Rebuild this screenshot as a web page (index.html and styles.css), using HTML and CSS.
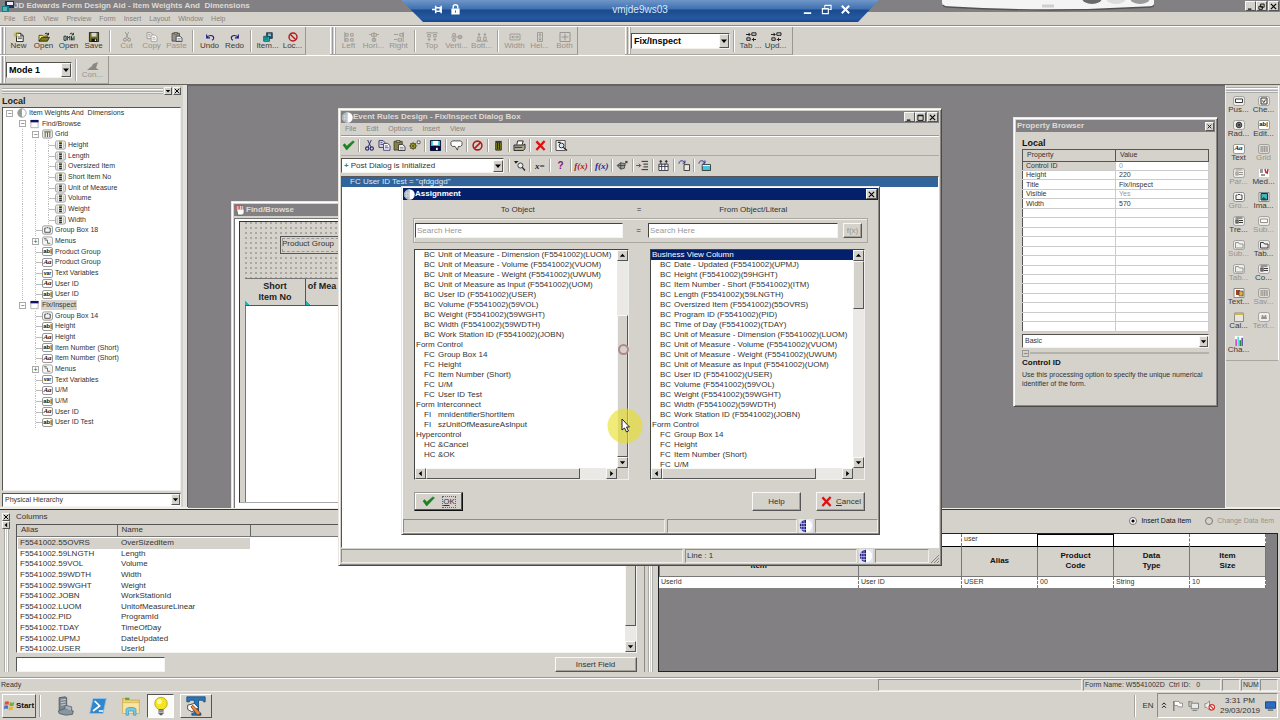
FILE: index.html
```html
<!DOCTYPE html>
<html lang="en">
<head>
<meta charset="utf-8">
<title>JD Edwards Form Design Aid</title>
<link rel="stylesheet" href="styles.css">
</head>
<body>
<svg class="sprite" aria-hidden="true">
  <symbol id="arr-d" viewBox="0 0 8 8"><path d="M1 2.5h6L4 6z" fill="#000"/></symbol>
  <symbol id="arr-u" viewBox="0 0 8 8"><path d="M1 5.5h6L4 2z" fill="#000"/></symbol>
  <symbol id="arr-l" viewBox="0 0 8 8"><path d="M5.5 1v6L2 4z" fill="#000"/></symbol>
  <symbol id="arr-r" viewBox="0 0 8 8"><path d="M2.5 1v6L6 4z" fill="#000"/></symbol>
  <symbol id="w-min" viewBox="0 0 8 8"><path d="M1 7h4" stroke="#000" stroke-width="1.4"/></symbol>
  <symbol id="w-max" viewBox="0 0 8 8"><path d="M1 1.3h6v6H1z M1 2h6" fill="none" stroke="#000" stroke-width="1"/></symbol>
  <symbol id="w-res" viewBox="0 0 8 8"><path d="M3 1.2h4v3.6H3z M1 3.8h4v3.4H1z" fill="#d4d0c8" stroke="#000"/></symbol>
  <symbol id="w-x" viewBox="0 0 8 8"><path d="M1 1l6 6M7 1L1 7" stroke="#000" stroke-width="1.3"/></symbol>
  <symbol id="globe" viewBox="0 0 12 12"><circle cx="6" cy="6" r="5.7" fill="#fff"/><path d="M6 .3a5.700 5.700 0 0 0 0 11.400z" fill="#9aa3ac"/><path d="M2.500 2.500v7M4.500 1v10M.5 4.500H6M.5 7.500H6" stroke="#e8eef2" stroke-width=".7"/></symbol>
  <symbol id="globe-b" viewBox="0 0 14 14"><rect width="14" height="14" fill="#e4e4ee"/><path d="M7 .8a6.200 6.200 0 0 1 0 12.400z" fill="#fff"/><path d="M7 .8a6.200 6.200 0 0 0 0 12.400z" fill="#1c1c8e"/><path d="M2.700 1v12M5 0v14M0 4.500h7M0 7.500h7M0 10.500h7" stroke="#e4e4ee" stroke-width=".6"/></symbol>
  <symbol id="new" viewBox="0 0 14 12"><path d="M4 1.500h5l3 3v7H4z" fill="#fff" stroke="#000"/><path d="M9 1.500v3h3M5.500 6h5M5.500 8h5" fill="none" stroke="#000" stroke-width=".8"/><path d="M3.500 0v7M0 3.500h7M1 1l5 5M6 1L1 6" stroke="#b5a82c" stroke-width=".8"/></symbol>
  <symbol id="open" viewBox="0 0 14 12"><path d="M1 11V4h4l1 1h5v2" fill="#ffe95c" stroke="#3a3a10"/><path d="M1 11l3-4.500h9.500L11 11z" fill="#7b7b22" stroke="#23230a"/><path d="M8 2.500c2-2 3-1 4 .8M12.300 1v2.500H10" fill="none" stroke="#000"/></symbol>
  <symbol id="omw" viewBox="0 0 14 12"><path d="M1 10V5h2.500v5zM5 10V5l1.500 2L8 5v5M10 5v5M13 5v5M11.500 7v3M8 2.500c2-2 3-1 4 .8M12.300 1v2.500H10" fill="none" stroke="#1c3b34" stroke-width="1.200"/></symbol>
  <symbol id="save" viewBox="0 0 12 12"><path d="M.5.500h11v11h-11z" fill="#6c7028" stroke="#111"/><path d="M3 1h6v4.500H3z" fill="#d9d6cf"/><path d="M3 8h6.500v3.500H3z" fill="#111"/><path d="M7 8.800h1.500v2H7z" fill="#eee"/></symbol>
  <symbol id="save-c" viewBox="0 0 12 12"><path d="M.5.500h11v11h-11z" fill="#18c6e8" stroke="#05052c"/><path d="M3 1h6v4.500H3z" fill="#fff"/><path d="M.5 6.500h11v5h-11z" fill="#0a0a3a"/><path d="M6.500 8.500h2v2.500h-2z" fill="#eee"/></symbol>
  <symbol id="cut" viewBox="0 0 12 12"><path d="M4 0l3.500 7.500M8 0L4.500 7.500" fill="none" stroke="currentColor"/><circle cx="3.500" cy="9.300" r="1.800" fill="none" stroke="currentColor" stroke-width="1.200"/><circle cx="8.500" cy="9.300" r="1.800" fill="none" stroke="currentColor" stroke-width="1.200"/></symbol>
  <symbol id="copy" viewBox="0 0 14 12"><path d="M1 .7h4.500l2 2V8H1z" fill="#eceae6" stroke="currentColor"/><path d="M6 3.700h4.500l2.500 2.500v5H6zM7.500 6.500h3M7.500 8.500h4M2.500 3h2.500M2.500 5h3" fill="#fff" stroke="currentColor" stroke-width=".9"/></symbol>
  <symbol id="paste" viewBox="0 0 14 12"><path d="M1 1.500h9v9.500H1z" fill="currentColor" stroke="#333" stroke-width=".8"/><path d="M3.500.5h4v2h-4z" fill="#d8c868" stroke="#333" stroke-width=".8"/><path d="M6 5h4.500L13 7.200v4.300H6z" fill="#fff" stroke="#333"/><path d="M7.500 8h4M7.500 9.800h4" stroke="#446" stroke-width=".7"/></symbol>
  <symbol id="gear" viewBox="0 0 14 12"><circle cx="5.500" cy="6.500" r="3" fill="#d8d23c" stroke="#444020"/><path d="M5.500 2v9M1 6.500h9M2.300 3.300l6.400 6.400M8.700 3.300L2.300 9.700" stroke="#5a5820" stroke-width=".9"/><path d="M10 1h3v3h-3z" fill="#fff" stroke="#555"/></symbol>
  <symbol id="undo" viewBox="0 0 14 12"><path d="M3 3v4h4M3 7c2-4 8-3.500 8.500 0 0 1.500-1 2.500-2 3" fill="none" stroke="#1b1b85" stroke-width="1.300"/></symbol>
  <symbol id="redo" viewBox="0 0 14 12"><path d="M11 3v4H7M11 7c-2-4-8-3.500-8.500 0 0 1.500 1 2.500 2 3" fill="none" stroke="#1b1b85" stroke-width="1.300"/></symbol>
  <symbol id="item" viewBox="0 0 14 14"><path d="M5 1h8v8H5z" fill="#1d5f74" stroke="#123"/><path d="M7 3h4M7 5h4" stroke="#fff"/><path d="M1 6h8v7H1z" fill="#20b5b5" stroke="#134"/><path d="M2 8h5M2 10h5" stroke="#063"/></symbol>
  <symbol id="no" viewBox="0 0 12 12"><circle cx="6" cy="6" r="4.800" fill="none" stroke="#b51a1a" stroke-width="1.700"/><path d="M2.600 2.600l6.800 6.800" stroke="#b51a1a" stroke-width="1.700"/></symbol>
  <symbol id="no2" viewBox="0 0 12 12"><circle cx="6" cy="6" r="4.800" fill="none" stroke="#b51a1a" stroke-width="1.700"/><path d="M9.400 2.600L2.600 9.400" stroke="#b51a1a" stroke-width="1.700"/></symbol>
  <symbol id="con" viewBox="0 0 14 10"><path d="M1 9l5-4 1-2 5-2-2 6 3 2z" fill="#8b8882"/></symbol>
  <symbol id="al1" viewBox="0 0 14 12"><path d="M2 0v12M3 2h3v3H3zM9 2h3v3H9zM3 8h3v3H3zM9 8h3v3H9z" fill="none" stroke="currentColor"/></symbol>
  <symbol id="al2" viewBox="0 0 14 12"><path d="M7 0v12M4 2h6v3H4zM5 8h4v3H5zM1 3h2M11 3h2" fill="none" stroke="currentColor"/></symbol>
  <symbol id="al3" viewBox="0 0 14 12"><path d="M12 0v12M8 2h4v3H8zM6 8h4v3H6zM1 3h5M1 9h4" fill="none" stroke="currentColor"/></symbol>
  <symbol id="al4" viewBox="0 0 14 12"><path d="M0 1h14M2 3h3v3H2zM9 3h3v3H9zM3.500 7v4M10.500 7v4M2 9h3M9 9h3" fill="none" stroke="currentColor"/></symbol>
  <symbol id="al5" viewBox="0 0 14 12"><path d="M0 6h14M2 2h3v3H2zM9 4h3v4H9zM2 8h3v3H2z" fill="none" stroke="currentColor"/></symbol>
  <symbol id="al6" viewBox="0 0 14 12"><path d="M0 11h14M2 6h3v4H2zM9 6h3v4H9zM3.500 1v4M10.500 1v4M2 3h3M9 3h3" fill="none" stroke="currentColor"/></symbol>
  <symbol id="wi" viewBox="0 0 14 12"><path d="M1 2.500h12v7H1zM3 6h8M5 4.500L3 6l2 1.500M9 4.500L11 6 9 7.500" fill="none" stroke="currentColor"/></symbol>
  <symbol id="he" viewBox="0 0 14 12"><path d="M4 .5h6v11H4zM7 2v8M5.500 4L7 2l1.500 2M5.500 8L7 10l1.500-2" fill="none" stroke="currentColor"/></symbol>
  <symbol id="bo" viewBox="0 0 14 12"><path d="M1 .5h12v11H1zM7 2v8M3 6h8" fill="none" stroke="currentColor" stroke-width="1.200"/></symbol>
  <symbol id="tab" viewBox="0 0 14 12"><path d="M1 3h5M4 1l2 2-2 2M8 1h5v3H8zM2 7h4v3H2zM8 9h5M10 7v4" fill="none" stroke="#222" stroke-width="1.200"/></symbol>
  <symbol id="check" viewBox="0 0 14 12"><path d="M1 5.500l4 5.500L13.500 2l-1.800-1L5 6.700 3 4z" fill="#118a1d" stroke="#0b5c14" stroke-width=".5"/></symbol>
  <symbol id="bubble" viewBox="0 0 14 12"><path d="M2.500 1h9L13 2.500v3L11.500 7H9l-1 4-2.500-4h-3L1 5.500v-3z" fill="#fff" stroke="#333" stroke-width=".9"/></symbol>
  <symbol id="bin" viewBox="0 0 12 12"><path d="M3 2.500h6V11H3z" fill="#8a8a1c" stroke="#222"/><path d="M2.500 1.500h7M5 3v7M7 3v7" stroke="#1d1d10"/></symbol>
  <symbol id="print" viewBox="0 0 14 12"><path d="M4 5l1-4h6l-1 4" fill="#fff" stroke="#222"/><path d="M1 5.500h10l2-1v5l-2 2H1z" fill="#aaa8a2" stroke="#222"/><path d="M2 8h8" stroke="#222"/><path d="M8 9.300h2" stroke="#cc2"/></symbol>
  <symbol id="redx" viewBox="0 0 12 12"><path d="M1.500 1.500L10.500 11M10.500 1L1.500 11" stroke="#e01010" stroke-width="2.500"/></symbol>
  <symbol id="find" viewBox="0 0 14 12"><path d="M1 .5h10v11H1z" fill="#f3f3f3" stroke="#444"/><circle cx="7" cy="6" r="2.600" fill="#dbe7ee" stroke="#222"/><path d="M9 8l4 3.500M3 2.500h3" stroke="#222" stroke-width="1.300"/></symbol>
  <symbol id="find2" viewBox="0 0 14 12"><path d="M1 1h5L3 4z" fill="#222"/><circle cx="8" cy="6" r="2.800" fill="#e6eef2" stroke="#333"/><path d="M10 8l3 3.500" stroke="#222" stroke-width="1.400"/></symbol>
  <symbol id="net" viewBox="0 0 14 12"><path d="M1 6l4-3 5 1-1 5-4 1zM5 3v7M2 6h8" fill="#9c9e98" stroke="#333" stroke-width=".8"/><path d="M10 1h2.500v2.500H10z" fill="#444"/></symbol>
  <symbol id="ins" viewBox="0 0 14 12"><path d="M0 6h5M3 4l2 2-2 2" fill="none" stroke="#b02020"/><path d="M6 1.500h7M8 4.500h5M8 7.500h5M6 10.500h7" stroke="#222"/></symbol>
  <symbol id="tbl" viewBox="0 0 14 12"><path d="M2 4.500h10v7H2zM2 7h10M5 4v7M8.500 4v7" fill="#fff" stroke="#223" stroke-width=".9"/><path d="M4 0v4M2.500 1.500h3M10 0v4M8.500 1.500h3" stroke="#223"/></symbol>
  <symbol id="cp2" viewBox="0 0 14 12"><path d="M1 4c0-4 5-4 6-1M7.500.5v3H5" fill="none" stroke="#22228a"/><path d="M6.500 5h6v6.500h-6z" fill="#e8e6df" stroke="#333"/></symbol>
  <symbol id="cp3" viewBox="0 0 14 12"><path d="M1 4c0-4 5-4 6-1M7.500.5v3H5" fill="none" stroke="#22228a"/><path d="M4.500 5h9v6.500h-9z" fill="#48c4dc" stroke="#333"/><path d="M5 6h8" stroke="#fff"/></symbol>
  <!-- tree icons share one rounded frame -->
  <symbol id="t-root" viewBox="0 0 12 10"><circle cx="6.500" cy="5" r="4.600" fill="#fff" stroke="#888" stroke-width=".8"/><path d="M6.500.4a4.600 4.600 0 0 0 0 9.200z" fill="#999"/></symbol>
  <symbol id="t-form" viewBox="0 0 12 10"><path d="M2 1h8v8H2z" fill="#fff" stroke="#999" stroke-width=".8"/><path d="M1.600.6h8.800v2.600H1.600z" fill="#121265"/></symbol>
  <symbol id="t-grid" viewBox="0 0 12 10"><rect x=".5" y=".5" width="11" height="9" rx="2" fill="#e9e9e4" stroke="#888" stroke-width=".8"/><path d="M2.500 2h7v1.300h-7z" fill="#6f7a1d"/><path d="M3.500 3v5.500M6 3v5.500M8.500 3v5.500" stroke="#555"/></symbol>
  <symbol id="t-col" viewBox="0 0 12 10"><rect x=".5" y=".5" width="11" height="9" rx="2" fill="#f1f1ee" stroke="#888" stroke-width=".8"/><path d="M4.500 1.500h3v7h-3z" fill="#222"/><path d="M4.500 1.500h3v1.500h-3z" fill="#8a9122"/><path d="M4.500 4.500h3M4.500 6.500h3" stroke="#fff" stroke-width=".7"/><path d="M2.500 2.500v6M9.500 2.500v6" stroke="#aaa" stroke-width=".8"/></symbol>
  <symbol id="t-box" viewBox="0 0 12 10"><rect x=".5" y=".5" width="11" height="9" rx="2" fill="#f5f5f3" stroke="#777" stroke-width=".8"/><path d="M4.500 3H3v4.500h6V3H7.500M5 2.500h2" fill="none" stroke="#333" stroke-width=".9"/></symbol>
  <symbol id="t-menu" viewBox="0 0 12 10"><rect x=".5" y=".5" width="11" height="9" rx="2" fill="#f5f5f3" stroke="#888" stroke-width=".8"/><path d="M2 2.500h3M3 4h3v3.500h3" fill="none" stroke="#555" stroke-width=".9"/></symbol>
  <!-- palette icons -->
  <symbol id="p-btn" viewBox="0 0 12 10"><rect x=".5" y=".5" width="11" height="9" rx="2" fill="#efeeeb" stroke="#888" stroke-width=".7"/><path d="M2.500 3h7v3.500h-7z" fill="#fff" stroke="currentColor"/></symbol>
  <symbol id="p-chk" viewBox="0 0 12 10"><rect x=".5" y=".5" width="11" height="9" rx="2" fill="#efeeeb" stroke="#888" stroke-width=".7"/><path d="M3 2h6v6H3zM4.500 4.500l1.200 2 2-3" fill="none" stroke="currentColor"/></symbol>
  <symbol id="p-rad" viewBox="0 0 12 10"><rect x=".5" y=".5" width="11" height="9" rx="2" fill="#efeeeb" stroke="#888" stroke-width=".7"/><circle cx="6" cy="5" r="2.800" fill="#777" stroke="currentColor"/><circle cx="6" cy="5" r="1.200" fill="currentColor"/></symbol>
  <symbol id="p-grid" viewBox="0 0 12 10"><rect x=".5" y=".5" width="11" height="9" rx="2" fill="#dddad4" stroke="#888" stroke-width=".7"/><path d="M2 3h8M2 5h8M2 7h8M4 2v6M6.500 2v6M9 2v6" stroke="currentColor" stroke-width=".8"/></symbol>
  <symbol id="p-form" viewBox="0 0 12 10"><rect x=".5" y=".5" width="11" height="9" rx="2" fill="#efeeeb" stroke="#888" stroke-width=".7"/><path d="M2.500 2h7M3 4h2v3H3zM6 4.500h4M6 6.500h4" fill="none" stroke="currentColor" stroke-width="1.200"/></symbol>
  <symbol id="p-med" viewBox="0 0 12 10"><path d="M1 1h10v8H1z" fill="#fff"/><path d="M2 2h3M2 4h3M3 7h4" stroke="#333"/><path d="M7 1l1 4M10 1L9 6" stroke="#c22" stroke-width="1.400"/></symbol>
  <symbol id="p-img" viewBox="0 0 12 10"><path d="M1 .5h10v9H1z" fill="#fff" stroke="#888"/><path d="M3 1.500h6.500v6.500H3z" fill="#3db8bb" stroke="#133"/><path d="M3 8l2.500-3 4 3z" fill="#175a3b"/></symbol>
  <symbol id="p-fold" viewBox="0 0 12 10"><rect x=".5" y=".5" width="11" height="9" rx="2" fill="#efeeeb" stroke="#888" stroke-width=".7"/><path d="M2.500 8V2.500h3l1 1.500h3.500v4z" fill="#eee" stroke="currentColor"/></symbol>
  <symbol id="p-text" viewBox="0 0 12 10"><path d="M1 .5h10v9H1z" fill="#fff" stroke="#888"/><path d="M3 2h4v5H3z" fill="#a3421d"/><path d="M6 3h4v5H6z" fill="#d9b43e" stroke="#333" stroke-width=".6"/></symbol>
  <symbol id="p-bin" viewBox="0 0 12 10"><rect x=".5" y=".5" width="11" height="9" rx="2" fill="#efeeeb" stroke="#888" stroke-width=".7"/><path d="M3 7l1-4h1l1 2 1-2h1l1 4z" fill="currentColor"/></symbol>
  <symbol id="p-cal" viewBox="0 0 12 10"><path d="M1.500 1h9v8.500h-9z" fill="#e9e7e0" stroke="#777" stroke-width=".8"/><path d="M1.500 1h9v2h-9z" fill="#c9b64f"/></symbol>
  <symbol id="p-chart" viewBox="0 0 12 12"><path d="M1 0h10v12H1z" fill="#fff"/><path d="M2.500 12V4" stroke="#d93bd0" stroke-width="2"/><path d="M5 12V1" stroke="#4ce0d8" stroke-width="2"/><path d="M7.500 12V5" stroke="#2c8d3c" stroke-width="2"/><path d="M9.800 12V2" stroke="#6a54b5" stroke-width="2"/></symbol>
</svg>

<header class="app-title">
  <svg class="app-ico" viewBox="0 0 12 11"><path d="M3 0h9v7H3z" fill="#24324a"/><path d="M5 1h6v3H5z" fill="#eef"/><path d="M0 5h7v6H0z" fill="#157f8a"/><path d="M1 7h4M1 9h4" stroke="#cff" stroke-width=".8"/></svg>
  <h1>JD Edwards Form Design Aid - Item Weights And&nbsp; Dimensions</h1>
  <div class="win-btns"><button aria-label="Minimize"><svg><use href="#w-min"/></svg></button><button aria-label="Restore"><svg><use href="#w-res"/></svg></button><button class="gap" aria-label="Close"><svg><use href="#w-x"/></svg></button></div>
</header>
<nav class="menu"><button>File</button><button>Edit</button><button>View</button><button>Preview</button><button>Form</button><button>Insert</button><button>Layout</button><button>Window</button><button>Help</button></nav>

<div class="bars">
  <div class="bar-row">
    <div class="bar">
      <i class="grip"></i>
      <button class="tb"><svg><use href="#new"/></svg>New</button><button class="tb"><svg><use href="#open"/></svg>Open</button><button class="tb"><svg><use href="#omw"/></svg>Open</button><button class="tb"><svg><use href="#save"/></svg>Save</button>
      <i class="sep"></i>
      <button class="tb" disabled><svg><use href="#cut"/></svg>Cut</button><button class="tb" disabled><svg><use href="#copy"/></svg>Copy</button><button class="tb" disabled><svg><use href="#paste"/></svg>Paste</button>
      <i class="sep"></i>
      <button class="tb"><svg><use href="#undo"/></svg>Undo</button><button class="tb"><svg><use href="#redo"/></svg>Redo</button>
      <i class="sep"></i>
      <button class="tb"><svg><use href="#item"/></svg>Item...</button><button class="tb"><svg><use href="#no"/></svg>Loc...</button>
    </div>
    <div class="bar bar-align">
      <i class="grip"></i>
      <button class="tb" disabled><svg><use href="#al1"/></svg>Left</button><button class="tb" disabled><svg><use href="#al2"/></svg>Hori...</button><button class="tb" disabled><svg><use href="#al3"/></svg>Right</button>
      <i class="sep"></i>
      <button class="tb" disabled><svg><use href="#al4"/></svg>Top</button><button class="tb" disabled><svg><use href="#al5"/></svg>Verti...</button><button class="tb" disabled><svg><use href="#al6"/></svg>Bott...</button>
      <i class="sep"></i>
      <button class="tb" disabled><svg><use href="#wi"/></svg>Width</button><button class="tb" disabled><svg><use href="#he"/></svg>Hei...</button><button class="tb" disabled><svg><use href="#bo"/></svg>Both</button>
    </div>
    <div class="bar bar-form">
      <i class="grip"></i>
      <div class="combo big"><select aria-label="Form"><option>Fix/Inspect</option></select><svg><use href="#arr-d"/></svg></div>
      <i class="sep"></i>
      <button class="tb"><svg><use href="#tab"/></svg>Tab ...</button><button class="tb"><svg><use href="#tab"/></svg>Upd...</button>
    </div>
  </div>
  <div class="bar-row">
    <div class="bar">
      <i class="grip"></i>
      <div class="combo mode"><select aria-label="Mode"><option>Mode 1</option></select><svg><use href="#arr-d"/></svg></div>
      <i class="sep"></i>
      <button class="tb con" disabled><svg><use href="#con"/></svg>Con...</button>
    </div>
  </div>
</div>

<main class="work">
  <aside class="tree-dock">
    <div class="dock-head"><i class="rails"></i><button class="mini" aria-label="Collapse"><svg><use href="#arr-d"/></svg></button><button class="mini" aria-label="Close"><svg><use href="#w-x"/></svg></button></div>
    <h2 class="local">Local</h2>
    <div class="tree-box">
      <ul class="tree">
        <li><b class="tog">−</b><svg><use href="#t-root"/></svg>Item Weights And&nbsp; Dimensions</li>
        <li><i></i><b class="tog">−</b><svg><use href="#t-form"/></svg>Find/Browse</li>
        <li><i></i><i class="v"></i><b class="tog">−</b><svg><use href="#t-grid"/></svg>Grid</li>
        <li><i></i><i class="v"></i><i class="v"></i><i class="s"></i><svg><use href="#t-col"/></svg>Height</li>
        <li><i></i><i class="v"></i><i class="v"></i><i class="s"></i><svg><use href="#t-col"/></svg>Length</li>
        <li><i></i><i class="v"></i><i class="v"></i><i class="s"></i><svg><use href="#t-col"/></svg>Oversized Item</li>
        <li><i></i><i class="v"></i><i class="v"></i><i class="s"></i><svg><use href="#t-col"/></svg>Short Item No</li>
        <li><i></i><i class="v"></i><i class="v"></i><i class="s"></i><svg><use href="#t-col"/></svg>Unit of Measure</li>
        <li><i></i><i class="v"></i><i class="v"></i><i class="s"></i><svg><use href="#t-col"/></svg>Volume</li>
        <li><i></i><i class="v"></i><i class="v"></i><i class="s"></i><svg><use href="#t-col"/></svg>Weight</li>
        <li><i></i><i class="v"></i><i class="v"></i><i class="s"></i><svg><use href="#t-col"/></svg>Width</li>
        <li><i></i><i class="v"></i><i class="s"></i><svg><use href="#t-box"/></svg>Group Box 18</li>
        <li><i></i><i class="v"></i><b class="tog">+</b><svg><use href="#t-menu"/></svg>Menus</li>
        <li><i></i><i class="v"></i><i class="s"></i><em>ab|</em>Product Group</li>
        <li><i></i><i class="v"></i><i class="s"></i><em class="aa">Aa</em>Product Group</li>
        <li><i></i><i class="v"></i><i class="s"></i><em class="var">var</em>Text Variables</li>
        <li><i></i><i class="v"></i><i class="s"></i><em class="aa">Aa</em>User ID</li>
        <li><i></i><i class="v"></i><i class="s"></i><em>ab|</em>User ID</li>
        <li><i></i><b class="tog">−</b><svg><use href="#t-form"/></svg><mark>Fix/Inspect</mark></li>
        <li><i></i><i></i><i class="s"></i><svg><use href="#t-box"/></svg>Group Box 14</li>
        <li><i></i><i></i><i class="s"></i><em>ab|</em>Height</li>
        <li><i></i><i></i><i class="s"></i><em class="aa">Aa</em>Height</li>
        <li><i></i><i></i><i class="s"></i><em>ab|</em>Item Number (Short)</li>
        <li><i></i><i></i><i class="s"></i><em class="aa">Aa</em>Item Number (Short)</li>
        <li><i></i><i></i><b class="tog">+</b><svg><use href="#t-menu"/></svg>Menus</li>
        <li><i></i><i></i><i class="s"></i><em class="var">var</em>Text Variables</li>
        <li><i></i><i></i><i class="s"></i><em class="aa">Aa</em>U/M</li>
        <li><i></i><i></i><i class="s"></i><em>ab|</em>U/M</li>
        <li><i></i><i></i><i class="s"></i><em class="aa">Aa</em>User ID</li>
        <li><i></i><i></i><i class="s"></i><em>ab|</em>User ID Test</li>
      </ul>
    </div>
    <div class="combo small"><select aria-label="Hierarchy"><option>Physical Hierarchy</option></select><svg><use href="#arr-d"/></svg></div>
  </aside>

  <section class="mdi">
    <div class="window find-win">
      <div class="win-title"><svg viewBox="0 0 12 12"><path d="M1 1h9v8l-2 2H3z" fill="#fff" stroke="#666"/><path d="M1 1h9v4H1z" fill="#d56a6a"/><path d="M3 1v4M6 1v4M8 1v4" stroke="#fff" stroke-width=".7"/></svg><h2>Find/Browse</h2></div>
      <div class="find-frame">
        <div class="find-body">
          <div class="dots"><div class="field">Product Group</div></div>
          <div class="find-heads"><span>Short<br>Item No</span><span>of Mea</span></div>
          <div class="find-rows"></div>
        </div>
      </div>
    </div>
  </section>

  <aside class="palette">
    <div class="palette-bar">
      <i class="rails"></i>
      <div class="palette-grid">
        <button class="tb"><svg><use href="#p-btn"/></svg>Pus...</button><button class="tb"><svg><use href="#p-chk"/></svg>Che...</button>
        <button class="tb"><svg><use href="#p-rad"/></svg>Rad...</button><button class="tb"><em>ab|</em>Edit...</button>
        <button class="tb"><em class="aa">Aa</em>Text</button><button class="tb" disabled><svg><use href="#p-grid"/></svg>Grid</button>
        <button class="tb" disabled><svg><use href="#p-form"/></svg>Par...</button><button class="tb"><svg><use href="#p-med"/></svg>Med...</button>
        <button class="tb" disabled><svg><use href="#t-box"/></svg>Gro...</button><button class="tb"><svg><use href="#p-img"/></svg>Ima...</button>
        <button class="tb"><svg><use href="#p-form"/></svg>Tre...</button><button class="tb" disabled><svg><use href="#p-btn"/></svg>Sub...</button>
        <button class="tb" disabled><svg><use href="#p-fold"/></svg>Sub...</button><button class="tb"><svg><use href="#p-fold"/></svg>Tab...</button>
        <button class="tb" disabled><svg><use href="#p-fold"/></svg>Tab...</button><button class="tb"><svg><use href="#p-form"/></svg>Co...</button>
        <button class="tb"><svg><use href="#p-text"/></svg>Text...</button><button class="tb" disabled><svg><use href="#p-grid"/></svg>Sav...</button>
        <button class="tb"><svg><use href="#p-cal"/></svg>Cal...</button><button class="tb" disabled><svg><use href="#p-bin"/></svg>Text...</button>
        <button class="tb"><svg><use href="#p-chart"/></svg>Cha...</button>
      </div>
    </div>
  </aside>
</main>

<section class="dock">
  <div class="dock-side"><button class="mini" aria-label="Close"><svg><use href="#w-x"/></svg></button><button class="mini" aria-label="Collapse"><svg><use href="#arr-l"/></svg></button><i class="vrails"></i></div>
  <div class="columns">
    <h2>Columns</h2>
    <div class="col-box">
      <table class="col-head"><tr><th class="c1">Alias</th><th class="c2">Name</th><th></th></tr></table>
      <div class="col-body">
        <ul class="col-list">
          <li class="sel"><span>F5541002.55OVRS</span><span>OverSizedItem</span></li>
          <li><span>F5541002.59LNGTH</span><span>Length</span></li>
          <li><span>F5541002.59VOL</span><span>Volume</span></li>
          <li><span>F5541002.59WDTH</span><span>Width</span></li>
          <li><span>F5541002.59WGHT</span><span>Weight</span></li>
          <li><span>F5541002.JOBN</span><span>WorkStationId</span></li>
          <li><span>F5541002.LUOM</span><span>UnitofMeasureLinear</span></li>
          <li><span>F5541002.PID</span><span>ProgramId</span></li>
          <li><span>F5541002.TDAY</span><span>TimeOfDay</span></li>
          <li><span>F5541002.UPMJ</span><span>DateUpdated</span></li>
          <li><span>F5541002.USER</span><span>UserId</span></li>
        </ul>
        <div class="vscroll"><button aria-label="Up"><svg><use href="#arr-u"/></svg></button><i class="thumb col-thumb"></i><i class="track"></i><button aria-label="Down"><svg><use href="#arr-d"/></svg></button></div>
      </div>
    </div>
    <div class="col-foot"><input type="text" aria-label="Column filter"><button class="push">Insert Field</button></div>
  </div>
  <i class="vrails splitter"></i>
  <div class="items">
    <div class="radios"><label><input type="radio" name="mode" checked>Insert Data Item</label><label class="off"><input type="radio" name="mode" disabled>Change Data Item</label></div>
    <div class="items-box">
      <table class="items-table">
        <colgroup><col><col class="w103"><col class="w76"><col class="w76"><col class="w76"><col class="w76"></colgroup>
        <tr class="query"><td></td><td></td><td>user</td><td class="cur"></td><td></td><td></td></tr>
        <tr><th>&nbsp;<br>Item</th><th></th><th>Alias</th><th>Product<br>Code</th><th>Data<br>Type</th><th>Item<br>Size</th></tr>
        <tr><td>UserId</td><td>User ID</td><td>USER</td><td>00</td><td>String</td><td>10</td></tr>
      </table>
    </div>
  </div>
</section>

<footer class="status"><span class="ready">Ready</span><span class="pane p-a"></span><span class="pane p-b">Form Name: W5541002D&nbsp; Ctrl ID:&nbsp;&nbsp; 0</span><span class="pane p-c"></span><span class="pane p-c">NUM</span><span class="pane p-c"></span></footer>

<footer class="taskbar">
  <button class="start"><svg viewBox="0 0 12 12"><path d="M1 2c2-1 3-1 4.500 0L4.800 5.500C3.500 4.800 2 4.800.5 5.500z" fill="#d9562b"/><path d="M6.300 2.300c2 1 3 1 5 0L10.500 6c-2 1-3 .8-4.800 0z" fill="#7aae3c"/><path d="M.3 6.300c1.500-.8 3-.8 4.300 0L4 10C2.500 9.200 1.500 9.200 0 10z" fill="#3f77c8"/><path d="M5.400 6.800c1.800.9 3 .9 4.800 0L9.500 10.500c-2 1-3 .8-4.700 0z" fill="#eab92e"/></svg>Start</button>
  <i class="sep"></i>
  <button class="task" aria-label="Server Manager"><svg viewBox="0 0 24 24"><path d="M5 2l7-1 2 1v15l-7 2-2-1z" fill="#7c8790" stroke="#4b545c"/><path d="M7 5l6-1M7 8l6-1M7 11l6-1" stroke="#d3dbe0"/><path d="M4 18l8-3 10 3-1 4-8 1-8-2z" fill="#8996a1" stroke="#505b64"/><path d="M12 15v-4l8 2v5" fill="#a7b4bf" stroke="#59636b"/></svg></button>
  <button class="task" aria-label="PowerShell"><svg viewBox="0 0 24 24"><path d="M6 3h16l-4 18H2z" fill="#3386c9" stroke="#8fc2e8"/><path d="M8 6l6 6-8 6M13 18h5" fill="none" stroke="#fff" stroke-width="2"/></svg></button>
  <button class="task" aria-label="Explorer"><svg viewBox="0 0 24 24"><path d="M2 3h7l2 2h11v15H2z" fill="#f1d277" stroke="#c9a545"/><path d="M2 8h20v13H2z" fill="#f8e5a2" stroke="#d4b45c"/><path d="M5 2h5v3H5z" fill="#58a846"/><path d="M6 23v-7c0-3 12-3 12 0v7h-3v-5H9v5z" fill="#7cc7e3" stroke="#4a9ec0"/></svg></button>
  <button class="task lit" aria-label="Tip"><svg viewBox="0 0 24 24"><circle cx="12" cy="9" r="7.500" fill="#f5e421" stroke="#b3a512"/><circle cx="10" cy="7" r="3" fill="#fdf9a8"/><path d="M9 16h6v5l-2 2h-2l-2-2z" fill="#5b5b57"/><path d="M9 18h6M9 20h6" stroke="#ddd"/></svg></button>
  <button class="task raised" aria-label="Form Design Aid"><svg viewBox="0 0 28 24"><path d="M3 1h22v6h-2l-1-2h-5v15l3 1v2H9v-2l3-1V5H7L6 7H3z" fill="#2b76b8" stroke="#174a7a"/><path d="M4 11l8-2 5 5-8 5-5-3z" fill="#fff" stroke="#333"/><path d="M8 13l2-2 9 9-1 3-3-1z" fill="#e98a3c" stroke="#7b3a10"/></svg></button>
  <span class="grow"></span>
  <i class="sep"></i><span class="lang">EN</span>
  <div class="tray">
    <svg viewBox="0 0 8 12"><path d="M1.500 5L4 2.500 6.500 5M1.500 9L4 6.500 6.500 9" fill="none" stroke="#111" stroke-width="1.300"/></svg>
    <svg viewBox="0 0 12 12"><path d="M2 1v11" stroke="#666" stroke-width="1.200"/><path d="M2.500 1.500h5l1 2h3v4H7L6 6H2.500z" fill="#fff" stroke="#777" stroke-width=".8"/></svg>
    <svg viewBox="0 0 12 12"><path d="M3.500 3.500h8v6h-8z" fill="#e9e9e9" stroke="#777"/><path d="M5 11.500h5M1 1v6h2M1 2h4" stroke="#777" fill="none"/></svg>
    <svg viewBox="0 0 12 12"><path d="M1 4h2l3-3v10L3 8H1z" fill="#eee" stroke="#777" stroke-width=".8"/><circle cx="8.500" cy="8" r="3" fill="#fff" stroke="#d63228" stroke-width="1.300"/><path d="M6.500 6l4 4" stroke="#d63228" stroke-width="1.200"/></svg>
    <time>3:31 PM<br>29/03/2019</time>
    <svg viewBox="0 0 12 12"><path d="M.5 2h11v7H.5z" fill="#2c6dc4" stroke="#1b3e78"/><path d="M3 11h6" stroke="#333"/></svg>
  </div>
</footer>

<section class="window prop-win">
  <div class="win-title"><h2>Property Browser</h2><div class="win-btns"><button aria-label="Close"><svg><use href="#w-x"/></svg></button></div></div>
  <div class="prop-body">
    <h3>Local</h3>
    <table class="props">
      <tr><th>Property</th><th>Value</th></tr>
      <tr class="dim"><td class="hi">Control ID</td><td>0</td></tr>
      <tr><td>Height</td><td>220</td></tr>
      <tr><td>Title</td><td>Fix/Inspect</td></tr>
      <tr class="dim"><td>Visible</td><td>Yes</td></tr>
      <tr><td>Width</td><td>570</td></tr>
      <tr><td></td><td></td></tr><tr><td></td><td></td></tr><tr><td></td><td></td></tr><tr><td></td><td></td></tr><tr><td></td><td></td></tr><tr><td></td><td></td></tr><tr><td></td><td></td></tr><tr><td></td><td></td></tr><tr><td></td><td></td></tr><tr><td></td><td></td></tr><tr><td></td><td></td></tr><tr><td></td><td></td></tr><tr><td></td><td></td></tr>
    </table>
    <div class="combo small"><select aria-label="Level"><option>Basic</option></select><svg><use href="#arr-d"/></svg></div>
    <div class="fold"><b class="tog">−</b><i></i></div>
    <h4>Control ID</h4>
    <p>Use this processing option to specify the unique numerical identifier of the form.</p>
  </div>
</section>

<section class="window er-win">
  <div class="win-title"><svg><use href="#globe"/></svg><h2>Event Rules Design - Fix/Inspect Dialog Box</h2><div class="win-btns"><button aria-label="Minimize"><svg><use href="#w-min"/></svg></button><button aria-label="Maximize"><svg><use href="#w-max"/></svg></button><button class="gap" aria-label="Close"><svg><use href="#w-x"/></svg></button></div></div>
  <nav class="menu er-menu"><button>File</button><button>Edit</button><button>Options</button><button>Insert</button><button>View</button></nav>
  <div class="er-bar">
    <button aria-label="OK"><svg><use href="#check"/></svg></button><i class="sep"></i>
    <button class="navy" aria-label="Cut"><svg><use href="#cut"/></svg></button><button class="navy" aria-label="Copy"><svg><use href="#copy"/></svg></button><button class="olive" aria-label="Paste"><svg><use href="#paste"/></svg></button><button aria-label="Settings"><svg><use href="#gear"/></svg></button><i class="sep"></i>
    <button aria-label="Save"><svg><use href="#save-c"/></svg></button><i class="sep"></i><button aria-label="Comment"><svg><use href="#bubble"/></svg></button><i class="sep"></i><button aria-label="Disable"><svg><use href="#no2"/></svg></button><i class="sep"></i><button aria-label="Delete"><svg><use href="#bin"/></svg></button><i class="sep"></i><button aria-label="Print"><svg><use href="#print"/></svg></button><i class="sep"></i><button aria-label="Remove"><svg><use href="#redx"/></svg></button><i class="sep"></i><button aria-label="Find"><svg><use href="#find"/></svg></button>
  </div>
  <div class="er-bar second">
    <div class="combo er-combo"><b>+</b><select aria-label="Event"><option>Post Dialog is Initialized</option></select><svg><use href="#arr-d"/></svg></div>
    <div class="er-tools">
    <i class="sep"></i><button aria-label="If"><svg><use href="#find2"/></svg></button><i class="sep"></i><button class="fx" aria-label="Assign">x=</button><i class="sep"></i><button class="fx purple">?</button><i class="sep"></i><button class="fx red">f(x)</button><i class="sep"></i><button class="fx blue">f(x)</button><i class="sep"></i><button aria-label="Connect"><svg><use href="#net"/></svg></button><i class="sep"></i><button aria-label="Indent"><svg><use href="#ins"/></svg></button><i class="sep"></i><button aria-label="Table"><svg><use href="#tbl"/></svg></button><i class="sep"></i><button aria-label="Report"><svg><use href="#cp2"/></svg></button><i class="sep"></i><button aria-label="Form call"><svg><use href="#cp3"/></svg></button>
    </div>
  </div>
  <div class="er-code"><p>FC User ID Test = "qfdgdgd"</p></div>
  <div class="er-status"><span class="pane grow"></span><span class="pane line">Line : 1</span><svg><use href="#globe-b"/></svg><span class="pane tail"></span><svg class="sizer" viewBox="0 0 8 8"><path d="M0 8L8 0M3 8l5-5M6 8l2-2" stroke="#888"/></svg></div>
</section>

<section class="window dlg" role="dialog" aria-label="Assignment">
  <div class="win-title active"><svg><use href="#globe"/></svg><h2>Assignment</h2><div class="win-btns"><button aria-label="Close"><svg><use href="#w-x"/></svg></button></div></div>
  <div class="dlg-heads"><label for="to">To Object</label><span>=</span><label for="from">From Object/Literal</label></div>
  <div class="dlg-search"><input id="to" type="text" placeholder="Search Here"><span>=</span><input id="from" type="text" placeholder="Search Here"><button class="push" disabled>f(x)</button></div>
  <div class="dlg-lists">
    <div class="list">
      <ul>
        <li><b>BC</b>Unit of Measure - Dimension (F5541002)(LUOM)</li><li><b>BC</b>Unit of Measure - Volume (F5541002)(VUOM)</li><li><b>BC</b>Unit of Measure - Weight (F5541002)(UWUM)</li><li><b>BC</b>Unit of Measure as Input (F5541002)(UOM)</li><li><b>BC</b>User ID (F5541002)(USER)</li><li><b>BC</b>Volume (F5541002)(59VOL)</li><li><b>BC</b>Weight (F5541002)(59WGHT)</li><li><b>BC</b>Width (F5541002)(59WDTH)</li><li><b>BC</b>Work Station ID (F5541002)(JOBN)</li><li class="cat">Form Control</li><li><b>FC</b>Group Box 14</li><li><b>FC</b>Height</li><li><b>FC</b>Item Number (Short)</li><li><b>FC</b>U/M</li><li><b>FC</b>User ID Test</li><li class="cat">Form Interconnect</li><li><b>FI</b>mnIdentifierShortItem</li><li><b>FI</b>szUnitOfMeasureAsInput</li><li class="cat">Hypercontrol</li><li><b>HC</b>&amp;Cancel</li><li><b>HC</b>&amp;OK</li>
      </ul>
      <div class="vscroll"><button aria-label="Up"><svg><use href="#arr-u"/></svg></button><i class="track"></i><i class="thumb to-thumb"></i><button aria-label="Down"><svg><use href="#arr-d"/></svg></button></div>
      <div class="hscroll"><button aria-label="Left"><svg><use href="#arr-l"/></svg></button><i class="thumb"></i><i class="track"></i><button aria-label="Right"><svg><use href="#arr-r"/></svg></button></div>
    </div>
    <div class="list">
      <ul>
        <li class="cat sel">Business View Column</li><li><b>BC</b>Date - Updated (F5541002)(UPMJ)</li><li><b>BC</b>Height (F5541002)(59HGHT)</li><li><b>BC</b>Item Number - Short (F5541002)(ITM)</li><li><b>BC</b>Length (F5541002)(59LNGTH)</li><li><b>BC</b>Oversized Item (F5541002)(55OVRS)</li><li><b>BC</b>Program ID (F5541002)(PID)</li><li><b>BC</b>Time of Day (F5541002)(TDAY)</li><li><b>BC</b>Unit of Measure - Dimension (F5541002)(LUOM)</li><li><b>BC</b>Unit of Measure - Volume (F5541002)(VUOM)</li><li><b>BC</b>Unit of Measure - Weight (F5541002)(UWUM)</li><li><b>BC</b>Unit of Measure as Input (F5541002)(UOM)</li><li><b>BC</b>User ID (F5541002)(USER)</li><li><b>BC</b>Volume (F5541002)(59VOL)</li><li><b>BC</b>Weight (F5541002)(59WGHT)</li><li><b>BC</b>Width (F5541002)(59WDTH)</li><li><b>BC</b>Work Station ID (F5541002)(JOBN)</li><li class="cat">Form Control</li><li><b>FC</b>Group Box 14</li><li><b>FC</b>Height</li><li><b>FC</b>Item Number (Short)</li><li><b>FC</b>U/M</li>
      </ul>
      <div class="vscroll"><button aria-label="Up"><svg><use href="#arr-u"/></svg></button><i class="thumb from-thumb"></i><i class="track"></i><button aria-label="Down"><svg><use href="#arr-d"/></svg></button></div>
      <div class="hscroll"><button aria-label="Left"><svg><use href="#arr-l"/></svg></button><i class="thumb"></i><i class="track"></i><button aria-label="Right"><svg><use href="#arr-r"/></svg></button></div>
    </div>
  </div>
  <div class="dlg-btns"><button class="push default"><svg><use href="#check"/></svg><span><u>O</u>K</span></button><button class="push help">Help</button><button class="push"><svg><use href="#redx"/></svg><span><u>C</u>ancel</span></button></div>
  <div class="dlg-status"><span class="pane grow"></span><span class="pane mid"></span><svg><use href="#globe-b"/></svg><span class="pane end"></span></div>
</section>

<div class="remote">
  <svg viewBox="0 0 12 12"><path d="M0 6h4M4 2v8M4 4h5v4H4M10 2v8" fill="none" stroke="#fff" stroke-width="1.600"/></svg>
  <svg viewBox="0 0 12 12"><path d="M1.500 5h9v6.500h-9z" fill="#fff"/><path d="M3.500 5V3c0-3 5-3 5 0v2" fill="none" stroke="#fff" stroke-width="1.500"/><path d="M6 7v2.500" stroke="#2d5f9f"/></svg>
  <span>vmjde9ws03</span>
  <svg viewBox="0 0 12 12"><path d="M2 10h8" stroke="#fff" stroke-width="2"/></svg>
  <svg viewBox="0 0 12 12"><path d="M4 1.500h7V6H9M4 1.500V4M1.500 5h6.500v5.500H1.500zM1 5.500h7" fill="none" stroke="#fff" stroke-width="1.200"/></svg>
  <svg viewBox="0 0 12 12"><path d="M2 2l8 8M10 2l-8 8" stroke="#fff" stroke-width="2.200"/></svg>
</div>
<svg class="recorder" viewBox="0 0 212 12"><path d="M0 0h212v3q0 4-4 4Q105 13 6 7 1 7 0 3z" fill="#f4f4f4"/><path d="M1 5q1 2 5 2 100 6 202 0 3 0 4-2" fill="none" stroke="#55514f" stroke-width="1.300"/><path d="M100 4.500h12v3h-12z" fill="#d0d0d0"/><ellipse cx="150" cy="-2" rx="10" ry="6" fill="#6a6a6a"/><ellipse cx="174" cy="-2" rx="10" ry="6" fill="#dcdcdc"/><ellipse cx="198" cy="-2" rx="10" ry="6" fill="#9a9a9a"/></svg>
<svg class="pointer" viewBox="0 0 36 36"><circle cx="18" cy="18" r="17.500" fill="#e8e020" opacity=".6"/><path d="M15 11v11l2.500-2 2 4 2-1-2-4h3z" fill="#fff" stroke="#222"/></svg>
<i class="ring"></i>
</body>
</html>
```
FILE: styles.css
```css
:root {
  --face: #d5d2cb;
  --desk: #828083;
  --shade: #85827d;
  --dark: #444;
  --text: #333;
  --off: #96938d;
  --navy: #05206a;
}
* { box-sizing: border-box; }
body {
  margin: 0;
  min-height: 100vh;
  display: flex;
  flex-direction: column;
  position: relative;
  overflow: hidden;
  background: var(--face);
  color: var(--text);
  font: 8px/10px "Liberation Sans", Arial, sans-serif;
}
.sprite { display: none; }
h1, h2, h3, h4, p, ul { margin: 0; padding: 0; font-size: 8px; }
ul { list-style: none; }
i, em { font-style: normal; }
svg { flex: none; }
table { border-collapse: collapse; }
button, input, select { font: inherit; color: inherit; margin: 0; padding: 0; border: 0; border-radius: 0; background: none; }
button { display: flex; align-items: center; justify-content: center; }
select { appearance: none; flex: 1; min-width: 0; outline: 0; }
button:disabled { color: var(--off); }
.grow { flex: 1; }

.win-btns { display: flex; margin-left: auto; }
.win-btns button, .mini, .vscroll button, .hscroll button, .combo > svg, .thumb {
  background: var(--face);
  border: 1px solid;
  border-color: #f8f8f6 #555 #555 #f8f8f6;
}
.win-btns button { width: 11px; height: 10px; }
.win-btns .gap { margin-left: 1px; }
.win-btns svg { width: 7px; height: 7px; }
.mini { width: 8px; height: 8px; }
.mini svg { width: 6px; height: 6px; }
.sep { flex: none; width: 8px; height: 22px; background: linear-gradient(90deg, transparent 3px, #a5a29c 3px 4px, #fff 4px 5px, transparent 5px); }
.grip { flex: none; width: 6px; height: 100%; border-left: 1px solid #fff; border-right: 1px solid #aaa; background: linear-gradient(90deg, transparent 1px, #999 1px 2px, transparent 2px 3px, #fff 3px 4px, transparent 4px); }

.app-title { display: flex; align-items: center; height: 12px; padding: 0 1px 0 2px; background: var(--desk); color: #dedbd5; }
.app-ico { width: 12px; height: 11px; }
.app-title h1 { font-size: 8px; white-space: nowrap; }
.menu { display: flex; gap: 8px; height: 13px; padding: 0 4px; color: #85827d; font-size: 7px; }
.bars { border-top: 1px solid #8f8c86; border-bottom: 1px solid #66625c; }
.bar-row { display: flex; height: 29px; border-top: 1px solid #fff; }
.bar { display: flex; align-items: center; height: 28px; border-right: 1px solid #9a9792; border-bottom: 1px solid #a9a6a0; }
.bar-align { margin-left: 24px; }
.bar-form { margin-left: 47px; padding-right: 4px; }
.tb { flex-direction: column; justify-content: flex-start; width: 25px; height: 22px; padding-top: 2px; line-height: 8px; white-space: nowrap; color: #3c3a38; }
.tb svg { width: 14px; height: 10px; }
.con { margin-right: 3px; }
.combo { display: flex; align-items: center; border: 1px solid; border-color: #55524e #f4f2ee #f4f2ee #55524e; background: #fff; }
.combo > svg { width: 9px; height: 11px; }
.combo.small { height: 14px; }
.combo.small select { padding-left: 2px; font-size: 7px; }
.combo.big, .combo.mode { height: 16px; font-size: 9px; font-weight: bold; color: #000; padding-left: 2px; }
.combo.big > svg, .combo.mode > svg { width: 10px; height: 14px; }
.combo.big { width: 99px; }
.combo.mode { width: 66px; }

.work { flex: 1; display: flex; min-height: 0; }
.tree-dock { display: flex; flex-direction: column; width: 188px; padding: 2px 6px 1px 2px; border-right: 1px solid #5f5c58; box-shadow: inset -4px 0 #e4e2de; }
.dock-head { display: flex; align-items: center; gap: 1px; height: 8px; }
.rails { flex: 1; height: 6px; border-top: 1px solid #aaa; border-bottom: 1px solid #aaa; box-shadow: inset 0 1px #fff, inset 0 -1px #eee; background: linear-gradient(transparent 2px, #aaa 2px 3px, transparent 3px); }
.local { font-size: 9px; line-height: 12px; color: #222; }
.tree-box { flex: 1; min-height: 0; margin: 0 0 2px; overflow: hidden; background: #fff; border: 1px solid; border-color: #555 #eee #eee #555; }
.tree { display: grid; grid-auto-rows: 1fr; height: 320px; font-size: 7px; }
.tree li { display: flex; align-items: stretch; line-height: 10px; white-space: nowrap; }
.tree li > i, .tree .tog { flex: none; width: 13px; }
.tree .v, .tree .s { background: repeating-linear-gradient(#bbb 0 1px, transparent 1px 2px) 6px 0 / 1px 100% no-repeat; }
.tree .s { background: repeating-linear-gradient(#bbb 0 1px, transparent 1px 2px) 6px 0 / 1px 100% no-repeat, linear-gradient(#bbb, #bbb) 7px 5px / 6px 1px no-repeat; }
.tog { color: #444; font: 7px/7px "Liberation Sans", sans-serif; text-align: center; }
.tree .tog { align-self: center; width: 7px; height: 7px; margin: 0 3px; border: 1px solid #aaa; line-height: 5px; }
.tree svg, .tree em { width: 11px; height: 10px; margin-right: 2px; }
.tree em, .palette em { align-self: center; width: 11px; height: 9px; border: 1px solid #999; border-radius: 2px; font: bold 6px/7px "Liberation Sans", sans-serif; text-align: center; color: #111; background: #fff; }
.tree .aa, .palette .aa { font: italic bold 7px/7px "Liberation Serif", serif; }
.tree .var { font-size: 5px; }
.tree mark { align-self: center; margin-left: -1px; padding: 0 1px; background: #d5d3cf; color: inherit; line-height: 10px; }

.mdi { flex: 1; position: relative; overflow: hidden; background: var(--desk); border-top: 1px solid #66625c; }
.window { position: absolute; display: flex; flex-direction: column; padding: 2px; background: var(--face); border: 1px solid; border-color: #e8e6e2 #4c4a48 #4c4a48 #e8e6e2; box-shadow: inset 1px 1px #fff, inset -1px -1px #8d8a86; }
.win-title { display: flex; flex: none; align-items: center; height: 12px; padding: 0 1px 0 1px; background: var(--desk); color: #dedbd5; }
.win-title h2 { white-space: nowrap; }
.win-title > svg { width: 11px; height: 11px; }
.win-title.active { background: var(--navy); color: #fff; }

.find-win { left: 43px; top: 115px; width: 500px; height: 340px; }
.find-frame { flex: 1; display: flex; margin-top: 2px; padding: 2px 0 0 4px; background: #fff; border: 1px solid #777; }
.find-body { flex: 1; display: flex; flex-direction: column; height: 282px; border: 1px solid; border-color: #2626a0 #aaa #aaa #2626a0; padding-left: 5px; background: var(--face); }
.dots { height: 56px; padding: 14px 0 0 35px; background: radial-gradient(circle at 1px 1px, #aaa7a1 1px, transparent 1px) 0 0 / 5px 5px; }
.field { width: 90px; height: 18px; padding: 1px 0 0 1px; border: 1px solid #555; outline: 1px dashed #999; outline-offset: -3px; background: var(--face); line-height: 12px; }
.find-heads { display: flex; height: 28px; font: bold 9px/11px "Liberation Sans", sans-serif; text-align: center; color: #222; border-top: 1px solid #777; border-bottom: 1px solid #555; }
.find-heads span { width: 61px; padding-top: 2px; border-right: 1px solid #555; background: linear-gradient(45deg, #1cb3bb 3px, transparent 3px); }
.find-heads span + span { width: 33px; }
.find-rows { flex: 1; background: #fff; border-left: 1px solid #777; }

.palette { width: 55px; padding: 1px 1px 0 0; border-left: 1px solid #efedea; }
.palette-bar { display: flex; flex-direction: column; padding-top: 1px; border-right: 1px solid #fff; border-bottom: 1px solid #a9a6a0; }
.palette .rails { flex: none; }
.palette-grid { display: grid; grid-template-columns: 25px 25px; grid-auto-rows: 24px; padding: 0 0 3px; }
.palette .tb { padding-top: 3px; }
.palette .tb svg { width: 12px; height: 10px; }
.palette .tb em { width: 12px; height: 10px; flex: none; }

.dock { display: flex; margin-top: 1px; padding-bottom: 5px; border-top: 1px solid #333; box-shadow: 0 -2px #efedea; }
.dock-side { display: flex; flex-direction: column; width: 16px; padding: 3px 0 0 2px; }
.vrails { width: 5px; flex: 1; border-left: 1px solid #aaa; border-right: 1px solid #aaa; margin-left: 2px; background: linear-gradient(90deg, #fff 1px, transparent 1px 2px, #fff 2px 3px, transparent 3px); }
.columns { flex: 1; padding-right: 7px; border-right: 1px solid #8d8a86; }
.columns h2 { font-weight: normal; line-height: 14px; }
.col-box { background: #fff; border: 1px solid; border-color: #555 #f4f4f4 #f4f4f4 #555; }
.col-head { width: 100%; table-layout: fixed; }
.col-head th { height: 12px; padding: 0 4px; text-align: left; font-weight: normal; line-height: 10px; background: var(--face); border-right: 1px solid #666; border-bottom: 1px solid #777; }
.c1 { width: 100px; }
.c2 { width: 133px; }
.col-body { display: flex; height: 115px; overflow: hidden; }
.col-list { flex: 1; display: grid; grid-auto-rows: 1fr; height: 118px; padding-top: 1px; }
.col-list li { display: flex; gap: 4px; width: 232px; padding-left: 2px; line-height: 10px; margin-left: 1px; }
.col-list li span:first-child { width: 97px; }
.sel { background: var(--face); }
.col-foot { display: flex; justify-content: space-between; align-items: center; padding-top: 4px; }
.col-foot input { width: 149px; height: 15px; background: #fff; border: 1px solid; border-color: #555 #f4f4f4 #f4f4f4 #555; }
.col-foot .push { width: 82px; height: 15px; }
.push { background: var(--face); border: 1px solid; border-color: #f8f8f6 #555 #555 #f8f8f6; box-shadow: inset -1px -1px #a5a29c; }
.splitter { flex: none; margin: 6px 5px 0 3px; }
.items { flex: 1; display: flex; flex-direction: column; padding-right: 2px; }
.radios { display: flex; justify-content: flex-end; align-items: center; gap: 14px; height: 23px; padding-right: 4px; }
.radios label { display: flex; align-items: center; gap: 4px; font-size: 7px; color: #111; }
.radios .off { color: var(--off); }
.radios input { appearance: none; width: 8px; height: 8px; border: 1px solid #777; border-radius: 50%; background: #fff; }
.radios input:checked { background: radial-gradient(circle, #000 1px, #fff 2px); }
.radios input:disabled { background: var(--face); }
.items-box { flex: 1; padding-right: 11px; background: var(--desk); border: 1px solid #222; }
.items-table { width: 100%; table-layout: fixed; font-size: 7px; line-height: 9px; }
.items-table td { height: 12px; padding: 0 2px; background: #fff; border-right: 1px dashed #777; vertical-align: top; }
.items-table th { height: 30px; padding: 0; background: var(--face); border: 1px solid #777; border-top: 1px solid #000; font-size: 8px; line-height: 10px; color: #111; }
.items-table .cur { border: 1px solid #000; }
.w103 { width: 103px; }
.w76 { width: 76px; }

.status { display: flex; align-items: center; gap: 1px; height: 15px; padding: 0 2px 0 1px; border-top: 1px solid #999; border-bottom: 1px solid #f4f2ee; box-shadow: inset 0 1px #fff; font-size: 7px; }
.ready { flex: 1; }
.pane { height: 12px; padding: 0 1px; border: 1px solid; border-color: #908d88 #f0eeea #f0eeea #908d88; line-height: 10px; white-space: nowrap; }
.p-a { width: 204px; }
.p-b { width: 138px; }
.p-c { width: 18px; }
.taskbar { display: flex; align-items: center; height: 28px; padding: 1px 2px 2px; }
.start { gap: 1px; width: 34px; height: 24px; font-weight: bold; color: #111; border: 1px solid; border-color: #fff #555 #555 #fff; }
.start svg { width: 11px; height: 11px; }
.task { width: 33px; height: 24px; }
.task svg { width: 20px; height: 20px; }
.start + .sep { margin-right: 4px; }
.task.lit { width: 27px; background: #fbfbfa; border: 1px solid; border-color: #555 #fff #fff #555; }
.task.raised { width: 32px; margin-left: 6px; border: 1px solid; border-color: #fff #555 #555 #fff; }
.task.raised svg { width: 24px; }
.lang { width: 18px; text-align: center; }
.tray { display: flex; align-items: center; gap: 5px; height: 25px; padding: 0 1px 0 3px; border: 1px solid; border-color: #8f8c86 #fff #fff #8f8c86; }
.tray svg { width: 11px; height: 11px; }
.tray svg:first-child { width: 6px; }
.tray time { width: 40px; text-align: center; line-height: 10px; }

.prop-win { left: 1013px; top: 117px; width: 205px; height: 290px; }
.prop-win .win-btns button { width: 9px; height: 9px; }
.prop-win .win-btns svg { width: 5px; height: 5px; }
.prop-body { padding: 5px 6px; }
.prop-body h3 { font-size: 9px; line-height: 12px; color: #111; }
.props { width: 100%; height: 183px; table-layout: fixed; margin-bottom: 2px; font-size: 7px; line-height: 8px; background: #fff; border: 1px solid; border-color: #555 #ccc #ccc #555; }
.props th { height: 11px; padding: 0 4px; text-align: left; font-weight: normal; background: var(--face); border: 1px solid #555; }
.props td { height: 9px; padding: 0 3px; border-right: 1px solid #ccc; border-bottom: 1px solid #ccc; }
.props .hi { background: var(--face); }
.dim td + td { color: #999; }
.fold { display: flex; align-items: center; gap: 1px; padding: 2px 0; height: 10px; }
.fold .tog { width: 7px; height: 7px; border: 1px solid #999; line-height: 5px; }
.fold i { flex: 1; height: 2px; background: #b5b2ac; }
.prop-body h4 { line-height: 10px; color: #111; }
.prop-body p { padding-top: 2px; font-size: 7px; line-height: 9px; }

.er-win { left: 338px; top: 108px; width: 604px; height: 458px; }
.er-menu { gap: 10px; padding: 0 4px; border-bottom: 1px solid #999; box-shadow: 0 1px #fff; height: 13px; }
.er-bar { display: flex; flex: none; align-items: center; height: 20px; border-bottom: 1px solid #aaa; }
.er-bar.second { height: 19px; border: 0; }
.er-bar button { width: 15px; height: 14px; }
.er-bar svg { width: 13px; height: 11px; }
.er-bar .combo svg { width: 10px; height: 12px; }
.er-bar .sep { width: 6px; height: 13px; background: linear-gradient(90deg, transparent 2px, #a5a29c 2px 3px, #fff 3px 4px, transparent 4px); }
.navy { color: #29296e; }
.olive { color: #85823a; }
.er-combo { width: 163px; height: 15px; }
.er-combo b { color: #2d9c2d; padding: 0 2px; }
.er-tools { display: flex; flex: none; align-items: center; justify-content: space-between; width: 206px; margin-left: 2px; }
.fx { font: italic bold 9px/12px "Liberation Serif", serif; color: #222; }
.er-bar .purple { color: #7d1580; font: bold 10px/12px "Liberation Sans", sans-serif; }
.er-bar .red { color: #a82222; }
.er-bar .blue { color: #25259a; }
.er-code { flex: 1; margin: 1px 0; background: #fff; border: 1px solid; border-color: #555 #fff #fff #555; }
.er-code p { padding-left: 8px; line-height: 10px; background: #31649b; color: #dfe9f4; }
.er-status, .dlg-status { display: flex; flex: none; align-items: center; gap: 2px; height: 14px; }
.er-status .pane { height: 14px; font-size: 8px; line-height: 12px; }
.er-status .line { width: 172px; }
.er-status svg { width: 14px; height: 14px; }
.er-status .tail { width: 54px; }
.er-status .sizer { width: 8px; height: 8px; align-self: flex-end; }

.dlg { left: 401px; top: 186px; width: 479px; height: 349px; padding: 1px; }
.dlg .win-btns button { width: 11px; }
.dlg-heads { display: grid; grid-template-columns: 1fr 22px 1fr; height: 17px; padding: 0 18px 0 8px; align-items: center; text-align: center; margin-top: 1px; }
.dlg-heads span { padding-left: 7px; }
.dlg-search { display: grid; grid-template-columns: 1fr 25px 190px 24px; align-items: center; height: 25px; margin: 0 10px; padding: 0 5px 0 1px; border: 1px solid #aaa7a1; box-shadow: inset 1px 1px #eee; text-align: center; }
.dlg-search span { padding-left: 6px; }
.dlg-search input { height: 15px; padding: 0 1px; background: #fff; border: 1px solid; border-color: #444 #f4f4f4 #f4f4f4 #444; outline: 0; min-width: 0; }
.dlg-search input::placeholder { color: #999; opacity: 1; }
.dlg-search .push { width: 19px; height: 15px; margin-left: 5px; }
.dlg-lists { flex: 1; display: grid; grid-template-columns: 1fr 1fr; gap: 21px; margin: 6px 13px 0 11px; min-height: 0; }
.list { display: grid; grid-template: 1fr 11px / 1fr 11px; min-height: 0; background: #fff; border: 1px solid; border-color: #444 #eee #eee #444; overflow: hidden; }
.list ul { min-height: 0; min-width: 0; overflow: hidden; }
.list li { height: 10px; padding-left: 9px; line-height: 10px; white-space: nowrap; }
.list li b { display: inline-block; width: 14px; font-weight: normal; }
.list .cat { padding-left: 1px; }
.list .sel { background: var(--navy); color: #fff; }
.vscroll { display: flex; flex-direction: column; width: 11px; min-height: 0; }
.vscroll button, .hscroll button { flex: none; width: 11px; height: 11px; }
.vscroll svg, .hscroll svg { width: 7px; height: 7px; }
.track { flex: 1; background: #ebe9e5; }
.to-thumb { height: 142px; }
.from-thumb { height: 48px; }
.col-thumb { height: 78px; }
.hscroll { display: flex; }
.hscroll .thumb { width: 154px; }
.list::after { content: ""; background: var(--face); }
.dlg-btns { display: flex; gap: 15px; height: 19px; margin: 12px 13px 8px 11px; }
.dlg-btns .push { width: 49px; height: 19px; gap: 3px; }
.dlg-btns svg { width: 13px; height: 11px; }
.dlg-btns .default { gap: 8px; border-color: #999 #111 #111 #999; box-shadow: inset -1px -1px #555, inset 1px 1px #fff; }
.default span { outline: 1px dotted #666; }
.help { margin-left: auto; }
.dlg-status .mid { width: 130px; }
.dlg-status .end { width: 63px; }
.dlg-status svg { width: 14px; height: 14px; }
.dlg-status .pane { height: 14px; }

.remote { position: absolute; top: 0; left: 50%; display: flex; align-items: center; gap: 7px; width: 478px; height: 22px; margin-left: -239px; padding: 0 28px 3px 31px; clip-path: polygon(0 0, 100% 0, calc(100% - 21px) 100%, 22px 100%); background: linear-gradient(#6f96c8, #3f70b0 9px, #1c4a8c 10px, #2459a2 18px, #1c4788); color: #dbe8f8; font-size: 10px; }
.remote svg { width: 11px; height: 11px; }
.remote span { flex: 1; text-align: center; padding-left: 18px; }
.remote svg:nth-of-type(n+3) { margin-left: 1px; }
.recorder { position: absolute; top: 0; left: 942px; width: 212px; height: 12px; }
.pointer { position: absolute; left: 607px; top: 408px; width: 36px; height: 36px; }
.ring { position: absolute; left: 618px; top: 344px; width: 11px; height: 11px; border: 2px solid #b5858a; border-radius: 50%; }
```
